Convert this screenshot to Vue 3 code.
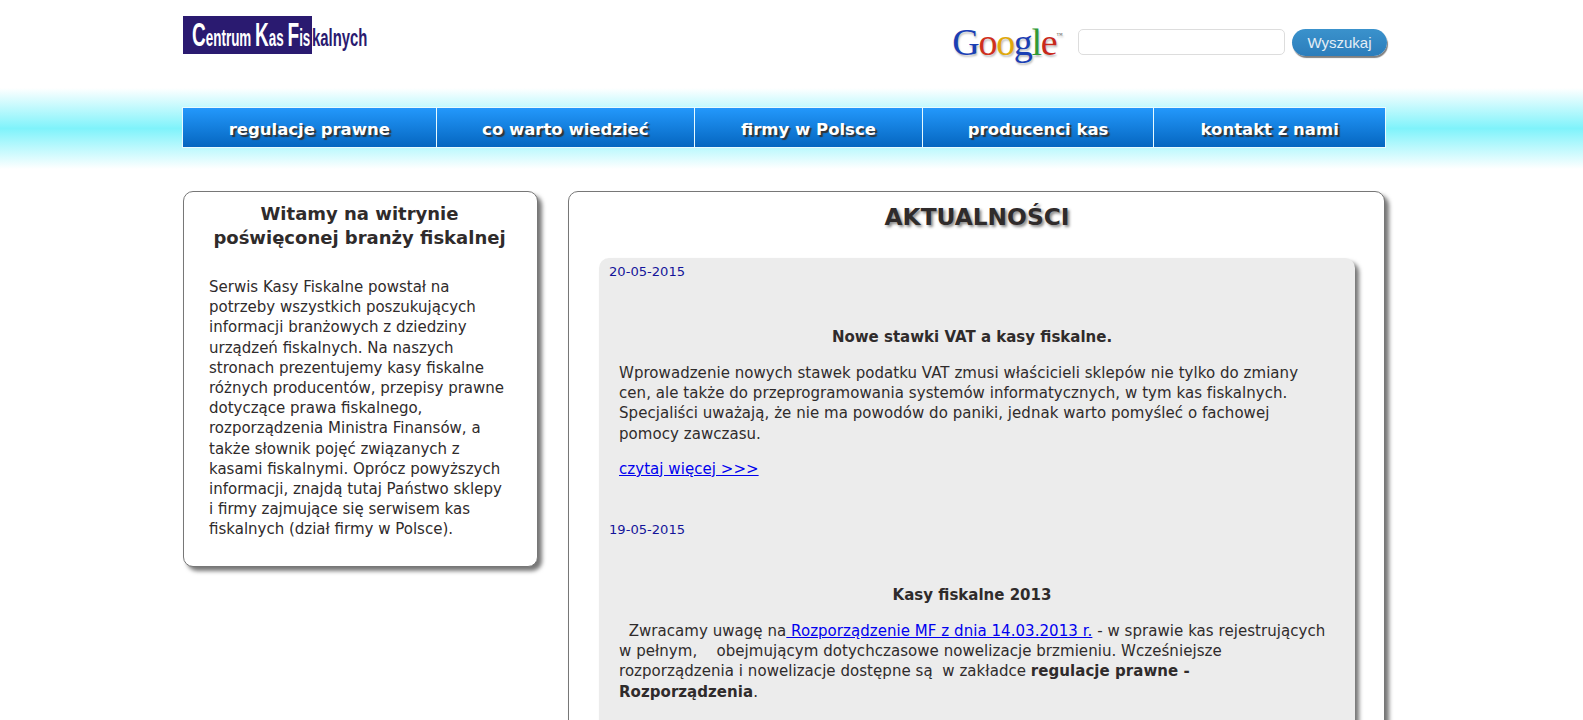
<script setup>
const navItems = [
  { label: 'regulacje prawne', width: 254 },
  { label: 'co warto wiedzieć', width: 259 },
  { label: 'firmy w Polsce', width: 228 },
  { label: 'producenci kas', width: 232 },
  { label: 'kontakt z nami', width: 232 },
]
const googleLetters = [
  { ch: 'G', color: '#1a3fb4' },
  { ch: 'o', color: '#d0301c' },
  { ch: 'o', color: '#e0a80c' },
  { ch: 'g', color: '#1a3fb4' },
  { ch: 'l', color: '#2f9a35' },
  { ch: 'e', color: '#c8281a' },
]
</script>

<template>
  <div class="page">
    <header class="top">
      <div class="logo">
        <div class="logo-text">
          <span class="on-box"><span class="cap">C</span>entrum <span class="cap">K</span>as <span class="cap">F</span>is</span><span class="off-box">kalnych</span>
        </div>
      </div>
      <div class="search">
        <div class="google">
          <span v-for="(l, i) in googleLetters" :key="i" :style="{ color: l.color }">{{ l.ch }}</span><sup>™</sup>
        </div>
        <input class="search-input" type="text" />
        <button class="search-btn">Wyszukaj</button>
      </div>
    </header>

    <div class="band">
      <nav class="nav">
        <a v-for="item in navItems" :key="item.label" class="nav-item" :style="{ width: item.width + 'px' }">{{ item.label }}</a>
      </nav>
    </div>

    <main class="columns">
      <aside class="welcome">
        <h2>Witamy na witrynie<br />poświęconej branży fiskalnej</h2>
        <p>Serwis Kasy Fiskalne powstał na potrzeby wszystkich poszukujących informacji branżowych z dziedziny urządzeń fiskalnych. Na naszych stronach prezentujemy kasy fiskalne różnych producentów, przepisy prawne dotyczące prawa fiskalnego, rozporządzenia Ministra Finansów, a także słownik pojęć związanych z kasami fiskalnymi. Oprócz powyższych informacji, znajdą tutaj Państwo sklepy i firmy zajmujące się serwisem kas fiskalnych (dział firmy w Polsce).</p>
      </aside>

      <section class="news">
        <h1>AKTUALNOŚCI</h1>
        <div class="news-list">
          <article class="entry first">
            <div class="date">20-05-2015</div>
            <h3>Nowe stawki VAT a kasy fiskalne.</h3>
            <p>Wprowadzenie nowych stawek podatku VAT zmusi właścicieli sklepów nie tylko do zmiany cen, ale także do przeprogramowania systemów informatycznych, w tym kas fiskalnych. Specjaliści uważają, że nie ma powodów do paniki, jednak warto pomyśleć o fachowej pomocy zawczasu.</p>
            <p class="more"><a href="#">czytaj więcej &gt;&gt;&gt;</a></p>
          </article>
          <article class="entry">
            <div class="date">19-05-2015</div>
            <h3>Kasy fiskalne 2013</h3>
            <p>&nbsp; Zwracamy uwagę na<a href="#"> Rozporządzenie MF z dnia 14.03.2013 r.</a> - w sprawie kas rejestrujących w pełnym, &nbsp;&nbsp; obejmującym dotychczasowe nowelizacje brzmieniu. Wcześniejsze rozporządzenia i nowelizacje dostępne są &nbsp;w zakładce <b>regulacje prawne - Rozporządzenia</b>.</p>
          </article>
        </div>
      </section>
    </main>
  </div>
</template>

<style scoped>
.page {
  font-family: "DejaVu Sans", Verdana, sans-serif;
  color: #2f2b2b;
  height: 720px;
  overflow: hidden;
  background: #fff;
}

.top {
  height: 88px;
  width: 1204px;
  margin-left: 183px;
  display: flex;
  justify-content: space-between;
}

.logo {
  margin-top: 16px;
  width: 190px;
  height: 38px;
}

.logo-text {
  width: 129px;
  height: 38px;
  background: #2a1a70;
  padding-left: 9px;
  box-sizing: border-box;
  font-family: "Liberation Sans", Arial, sans-serif;
  font-weight: 700;
  font-size: 24px;
  line-height: 36px;
  white-space: nowrap;
}

.logo-text > span {
  display: inline-block;
  transform-origin: left center;
}

.on-box {
  color: #fff;
  width: 120px;
  transform: scaleX(0.56);
}

.off-box {
  color: #2a1a70;
  transform: scaleX(0.62);
}

.cap {
  font-size: 34px;
}

.search {
  display: flex;
  align-items: flex-start;
  margin-top: 29px;
}

.google {
  font-family: "Liberation Serif", serif;
  font-size: 38px;
  line-height: 30px;
  letter-spacing: -1.3px;
  margin-right: 17px;
  margin-top: -2px;
  text-shadow: 1px 2px 2px rgba(0, 0, 0, 0.25);
}

.google sup {
  font-size: 6px;
  color: #555;
  vertical-align: 18px;
  line-height: 0;
}

.search-input {
  width: 207px;
  height: 26px;
  box-sizing: border-box;
  border: 1px solid #ddd;
  border-radius: 5px;
  background: #fff;
  padding: 0;
}

.search-btn {
  width: 95px;
  height: 27px;
  margin-left: 7px;
  border: 0;
  border-radius: 14px;
  background: linear-gradient(#3a92cc, #2c7dbb);
  box-shadow: 1px 2px 1px #808080;
  color: #e4eef6;
  font-family: "Liberation Sans", Arial, sans-serif;
  font-size: 15px;
  padding: 0;
}

.band {
  height: 81px;
  background: linear-gradient(#fff 0, #7ff3fb 50%, #fff 100%);
  padding-top: 19px;
  box-sizing: border-box;
}

.nav {
  display: flex;
  width: 1204px;
  height: 41px;
  margin-left: 182px;
  box-sizing: border-box;
  border: 1px solid #e8fbff;
  border-right: 0;
}

.nav-item {
  box-sizing: border-box;
  display: flex;
  align-items: center;
  justify-content: center;
  padding-top: 3px;
  background: linear-gradient(#2398fb, #0566c0);
  border-right: 1px solid #e8fbff;
  color: #fff;
  font-size: 16.5px;
  font-weight: 700;
  text-shadow: 2px 2px 1px #333;
}

.columns {
  display: flex;
  align-items: flex-start;
  gap: 30px;
  margin-left: 183px;
  width: 1202px;
  padding-top: 22px;
}

.welcome,
.news {
  box-sizing: border-box;
  background: #fff;
  border: 1px solid #777;
  border-radius: 10px;
  box-shadow: 4px 4px 4px #777;
}

.welcome {
  width: 355px;
  height: 376px;
  flex: none;
  padding: 10px 27px 0 25px;
}

.welcome h2 {
  margin: 0 0 27px;
  text-align: center;
  font-size: 18px;
  line-height: 24px;
  font-weight: 700;
}

.welcome p {
  margin: 0;
  font-size: 15px;
  line-height: 20.2px;
}

.news {
  flex: 1;
  height: 800px;
  padding: 0 29px 0 30px;
}

.news h1 {
  margin: 8px 0 25px;
  text-align: center;
  font-size: 23.3px;
  line-height: 33px;
  font-weight: 700;
  text-shadow: 2px 2px 3px #888;
}

.news-list {
  background: #ececec;
  border-radius: 10px;
  box-shadow: 4px 4px 4px #777;
  height: 700px;
  padding: 0 20px 0 10px;
}

.entry {
  padding-top: 6px;
  font-size: 15px;
  line-height: 20.2px;
}

.entry.first {
  height: 258px;
  box-sizing: border-box;
}

.date {
  font-size: 13.1px;
  line-height: 16px;
  color: #14149a;
}

.entry h3 {
  margin: 47px 0 16px;
  text-align: center;
  font-size: 15px;
  line-height: 20px;
  font-weight: 700;
}

.entry p {
  margin: 0 0 15px 10px;
  width: 707px;
  letter-spacing: 0.05px;
}

.entry a {
  color: #0000ee;
  text-decoration: underline;
}
</style>
